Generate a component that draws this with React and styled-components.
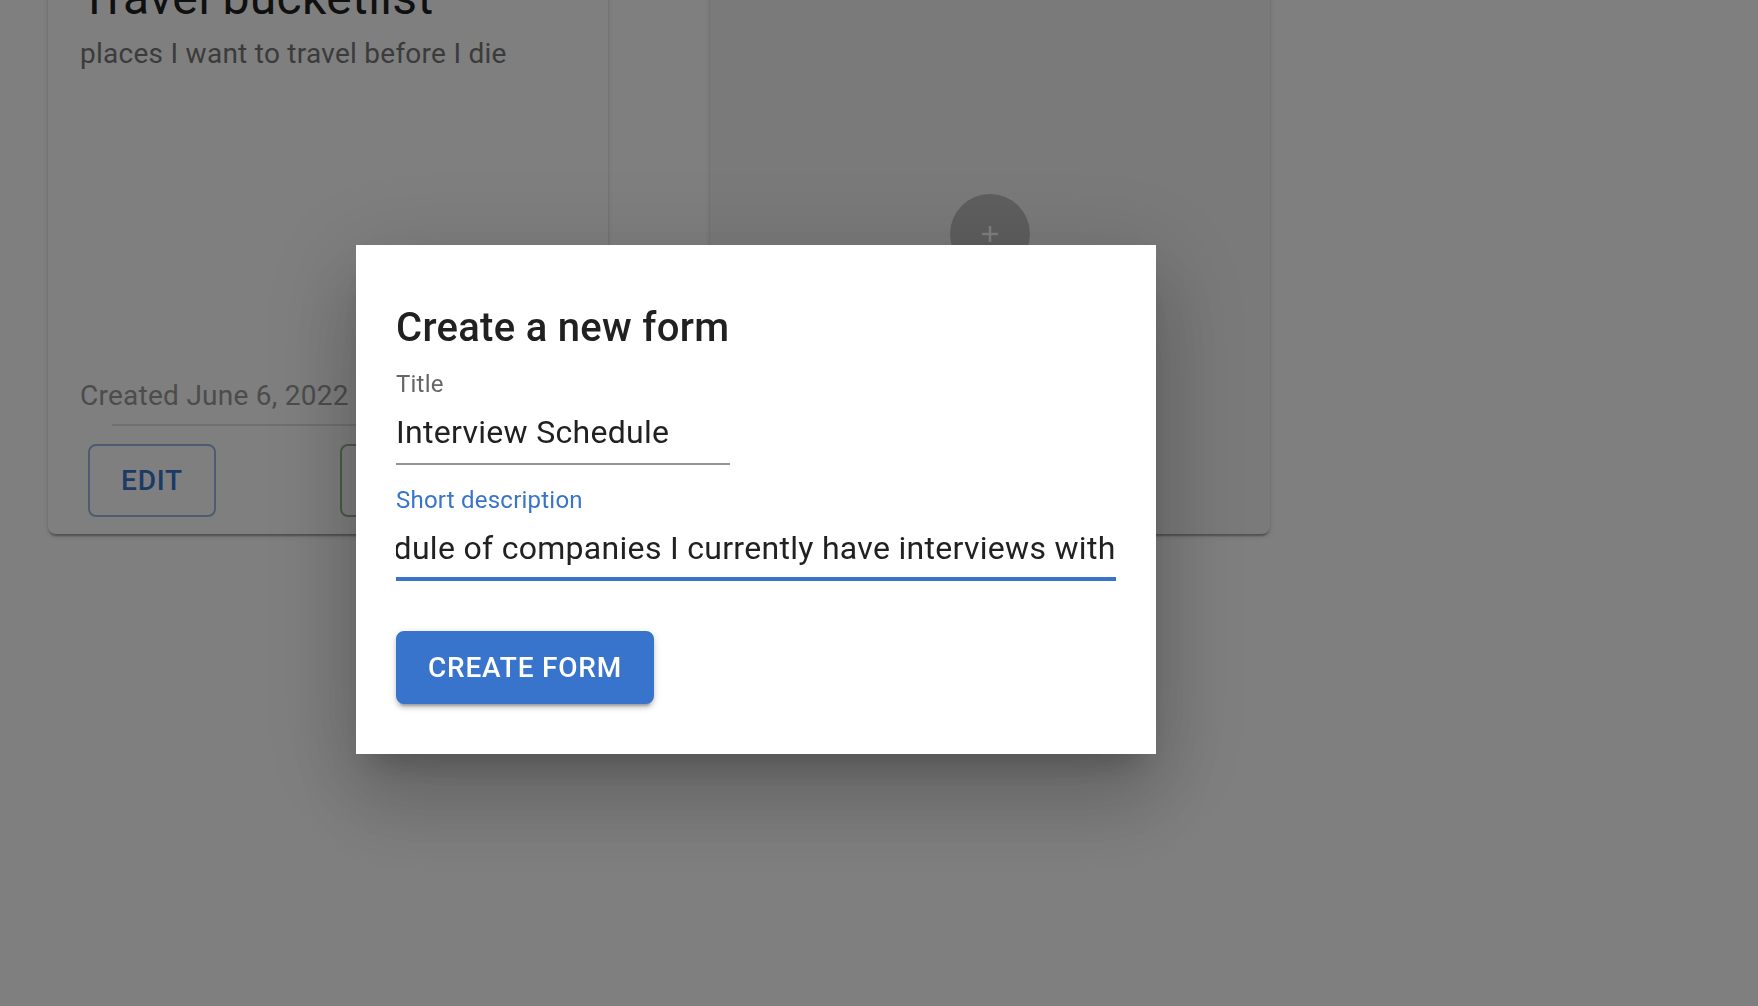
import React, { useLayoutEffect, useRef } from "react";
import styled, { createGlobalStyle } from "styled-components";

const GlobalStyle = createGlobalStyle`
  *, *::before, *::after { box-sizing: border-box; }
  body {
    margin: 0;
    background: #fff;
    color: #212121;
    font-family: Roboto, "Liberation Sans", sans-serif;
    -webkit-font-smoothing: antialiased;
  }
`;

const Page = styled.main`
  min-height: 100vh;
  overflow: hidden;
`;

const CardList = styled.div`
  display: flex;
  gap: 102px;
  margin-top: -66px;
  padding: 0 48px;
`;

const Card = styled.article`
  display: flex;
  flex-direction: column;
  flex: none;
  width: 560px;
  min-height: 600px;
  border-radius: 8px;
  background: ${(p) => (p.$muted ? "#f5f5f5" : "#fff")};
  justify-content: ${(p) => (p.$muted ? "center" : "flex-start")};
  align-items: ${(p) => (p.$muted ? "center" : "stretch")};
  box-shadow: 0 4px 2px -2px rgba(0, 0, 0, 0.2), 0 2px 2px 0 rgba(0, 0, 0, 0.14),
    0 2px 6px 0 rgba(0, 0, 0, 0.12);
`;

const CardBody = styled.div`
  display: flex;
  flex-direction: column;
  flex: 1;
  padding: 32px 32px 0;
`;

const CardTitle = styled.h2`
  margin: 0;
  font-size: 48px;
  line-height: 64px;
  font-weight: 400;
  letter-spacing: 0.0075em;
`;

const CardText = styled.p`
  margin: 4px 0 0;
  font-size: 28px;
  line-height: 40px;
  letter-spacing: 0.00938em;
  color: #777;
`;

const CreatedOn = styled.p`
  margin: auto 0 8px;
  font-size: 28px;
  line-height: 40px;
  letter-spacing: 0.00938em;
  color: #999;
`;

const Divider = styled.hr`
  width: calc(100% - 64px);
  height: 2px;
  margin: 0 32px;
  border: 0;
  background: #e0e0e0;
`;

const CardActions = styled.div`
  display: flex;
  gap: 124px;
  padding: 18px 40px 17px;
`;

const Button = styled.button`
  min-width: 128px;
  padding: 10px 30px;
  border: 2px solid;
  border-radius: 8px;
  background: transparent;
  font-family: inherit;
  font-size: 28px;
  line-height: 49px;
  font-weight: 500;
  letter-spacing: 0.02857em;
  text-transform: uppercase;
`;

const EditButton = styled(Button)`
  color: #3874cb;
  border-color: rgba(56, 116, 203, 0.5);
`;

const ViewButton = styled(Button)`
  color: #4a7b3c;
  border-color: rgba(74, 140, 60, 0.6);
`;

const AddButton = styled.button`
  display: grid;
  place-items: center;
  width: 80px;
  height: 80px;
  padding: 0;
  border: 0;
  border-radius: 50%;
  background: #bdbdbd;
  color: #fff;
`;

const Backdrop = styled.div`
  position: fixed;
  inset: 0;
  display: flex;
  align-items: center;
  justify-content: center;
  padding: 0 246px 7px 0;
  background: rgba(0, 0, 0, 0.5);
`;

const Dialog = styled.form`
  display: flex;
  flex-direction: column;
  align-items: flex-start;
  width: 800px;
  padding: 50px 40px;
  background: #fff;
  box-shadow: 0 22px 30px -14px rgba(0, 0, 0, 0.2), 0 48px 76px 6px rgba(0, 0, 0, 0.14),
    0 18px 92px 16px rgba(0, 0, 0, 0.12);
`;

const DialogTitle = styled.h1`
  margin: 0 0 8px;
  font-size: 40px;
  line-height: 66px;
  font-weight: 500;
  letter-spacing: 0.0075em;
`;

const Fields = styled.div`
  display: flex;
  flex-direction: column;
  gap: 20px;
  width: 100%;
  margin-bottom: 50px;
`;

const Field = styled.div`
  display: flex;
  flex-direction: column;
  width: ${(p) => p.$width};
`;

const Label = styled.label`
  margin-bottom: 2px;
  font-size: 24px;
  line-height: 30px;
  letter-spacing: 0.00938em;
  color: ${(p) => (p.$active ? "#3874cb" : "#666")};
`;

const Input = styled.input`
  width: 100%;
  height: 64px;
  padding: ${(p) => (p.$active ? "8px 0 6px" : "8px 0")};
  border: 0;
  border-bottom: ${(p) => (p.$active ? "4px solid #3874cb" : "2px solid #949494")};
  border-radius: 0;
  outline: 0;
  background: transparent;
  color: inherit;
  caret-color: transparent;
  font-family: inherit;
  font-size: 32px;
  line-height: 46px;
  letter-spacing: 0.00938em;
`;

const SubmitButton = styled(Button)`
  color: #fff;
  background: #3874cb;
  border-color: #3874cb;
  box-shadow: 0 6px 2px -4px rgba(0, 0, 0, 0.2), 0 4px 4px 0 rgba(0, 0, 0, 0.14),
    0 2px 10px 0 rgba(0, 0, 0, 0.12);
`;

function PlusIcon() {
  return (
    <svg width="16" height="16" viewBox="0 0 16 16" aria-hidden="true">
      <path d="M8 0v16M0 8h16" stroke="currentColor" strokeWidth="2.5" fill="none" />
    </svg>
  );
}

export default function App() {
  const description = useRef(null);

  // Keep the end of the long description in view, as it is while typing.
  useLayoutEffect(() => {
    const input = description.current;
    const showEnd = () => {
      input.scrollLeft = input.scrollWidth;
    };
    input.focus();
    input.setSelectionRange(input.value.length, input.value.length);
    showEnd();
    document.fonts.ready.then(showEnd);
  }, []);

  return (
    <>
      <GlobalStyle />
      <Page>
        <CardList>
          <Card>
            <CardBody>
              <CardTitle>Travel bucketlist</CardTitle>
              <CardText>places I want to travel before I die</CardText>
              <CreatedOn>Created June 6, 2022</CreatedOn>
              <Divider />
            </CardBody>
            <CardActions>
              <EditButton type="button">Edit</EditButton>
              <ViewButton type="button" aria-label="View" />
            </CardActions>
          </Card>
          <Card $muted>
            <AddButton type="button" aria-label="Add form">
              <PlusIcon />
            </AddButton>
          </Card>
        </CardList>
      </Page>
      <Backdrop>
        <Dialog role="dialog" aria-labelledby="dialog-title" onSubmit={(e) => e.preventDefault()}>
          <DialogTitle id="dialog-title">Create a new form</DialogTitle>
          <Fields>
            <Field $width="334px">
              <Label htmlFor="title">Title</Label>
              <Input id="title" defaultValue="Interview Schedule" />
            </Field>
            <Field $width="100%">
              <Label htmlFor="description" $active>
                Short description
              </Label>
              <Input
                id="description"
                ref={description}
                $active
                defaultValue="Schedule of companies I currently have interviews with"
              />
            </Field>
          </Fields>
          <SubmitButton type="submit">Create form</SubmitButton>
        </Dialog>
      </Backdrop>
    </>
  );
}
